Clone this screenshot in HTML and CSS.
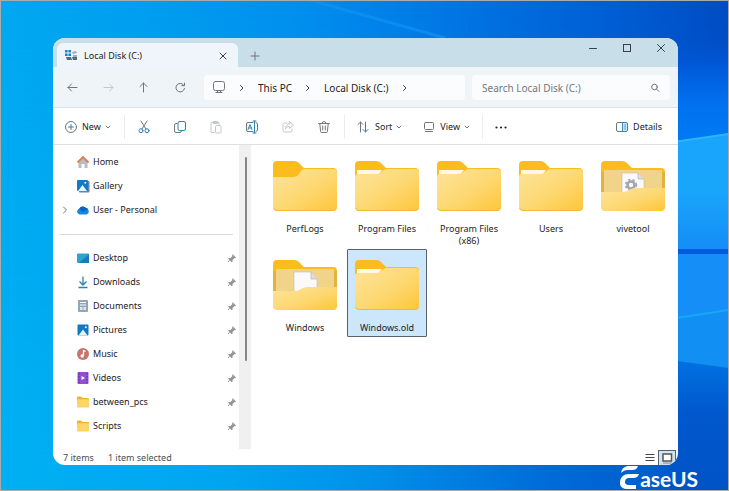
FILE: index.html
```html
<!DOCTYPE html>
<html lang="en">
<head>
<meta charset="utf-8">
<title>Local Disk (C:)</title>
<link rel="stylesheet" href="styles.css">
</head>
<body>
<svg class="wallpaper" viewBox="0 0 729 491" preserveAspectRatio="none" aria-hidden="true">
  <defs>
    <linearGradient id="sky" x1="0" y1="0" x2="1" y2="0">
      <stop offset="0" stop-color="#00a9f0"/><stop offset=".2" stop-color="#009ef0"/><stop offset=".42" stop-color="#008eee"/><stop offset=".6" stop-color="#0078e6"/><stop offset=".8" stop-color="#0062d8"/><stop offset="1" stop-color="#004cc4"/>
    </linearGradient>
    <linearGradient id="glow" x1="0" y1="0" x2="1" y2="0">
      <stop offset="0" stop-color="#00b0f2"/><stop offset=".3" stop-color="#00a6f0"/><stop offset=".5" stop-color="#0092ea"/><stop offset=".75" stop-color="#006cd8"/><stop offset="1" stop-color="#0053c6"/>
    </linearGradient>
    <linearGradient id="fade" x1="0" y1="0" x2="0" y2="1">
      <stop offset="0" stop-color="#000"/><stop offset="1" stop-color="#fff"/>
    </linearGradient>
    <mask id="low"><rect width="729" height="491" fill="url(#fade)"/></mask>
    <linearGradient id="edge" x1="0" y1="0" x2="0" y2="1">
      <stop offset="0" stop-color="#0052cc" stop-opacity="0"/><stop offset=".25" stop-color="#0058d8"/><stop offset=".6" stop-color="#0070ee"/><stop offset="1" stop-color="#007cf5"/>
    </linearGradient>
    <linearGradient id="pane1" x1="0" y1="0" x2="0" y2="1">
      <stop offset="0" stop-color="#18a4fa"/><stop offset=".5" stop-color="#18a6fb"/><stop offset="1" stop-color="#158cf6"/>
    </linearGradient>
    <linearGradient id="pane3" x1="0" y1="0" x2="0" y2="1">
      <stop offset="0" stop-color="#0072e2"/><stop offset=".4" stop-color="#0058cc"/><stop offset="1" stop-color="#0053c6"/>
    </linearGradient>
  </defs>
  <rect width="729" height="491" fill="url(#sky)"/>
  <rect width="729" height="491" fill="url(#glow)" mask="url(#low)"/>
  <path d="M310 0l135 38" stroke="#1292f4" stroke-width="3" opacity=".7"/>
  <path d="M670 38H729V145H670z" fill="url(#edge)"/>
  <path d="M670 143L729 133V250H670z" fill="url(#pane1)"/>
  <path d="M670 142.500L729 134" stroke="#2eb4fb" stroke-width="2"/>
  <path d="M670 253H729V370L670 360z" fill="#158ef7"/>
  <path d="M670 319L729 311V369L670 360z" fill="#128ff3"/>
  <path d="M670 319L729 310" stroke="#18a8fa" stroke-width="2"/>
  <path d="M670 249H729V254H670z" fill="#005ade"/>
  <path d="M670 360L729 368V491H670z" fill="url(#pane3)"/>
</svg>

<main class="window">
  <header class="titlebar">
    <div class="tab">
      <svg class="i14" viewBox="0 0 14 14"><path d="M1 1h2.600v2.600H1zM4.400 1H7v2.600H4.400zM1 4.400h2.600V7H1zM4.400 4.400H7V7H4.400z" fill="#1685c9"/><path d="M8 3l4-1 1 2-4 1zM9 6h4v2H9z" fill="#9aafbc"/><path d="M2 8h5l1 3H3zM8 8h5v3H9z" fill="#536c7d"/></svg>
      <span>Local Disk (C:)</span>
      <button class="plain tab-close" aria-label="Close tab"><svg class="i10" viewBox="0 0 10 10"><path class="d" d="M2 2l6 6M8 2l-6 6"/></svg></button>
    </div>
    <button class="plain new-tab" aria-label="New tab"><svg class="i10" viewBox="0 0 10 10"><path class="k" d="M5 1v8M1 5h8"/></svg></button>
    <div class="caption">
      <button class="plain" aria-label="Minimize"><svg class="i10" viewBox="0 0 10 10"><path class="d" d="M1.500 5.500h7"/></svg></button>
      <button class="plain" aria-label="Maximize"><svg class="i10" viewBox="0 0 10 10"><rect class="d" x="1.500" y="1.500" width="7" height="7"/></svg></button>
      <button class="plain" aria-label="Close"><svg class="i10" viewBox="0 0 10 10"><path class="d" d="M1.500 1.500l7 7M8.500 1.500l-7 7"/></svg></button>
    </div>
  </header>

  <nav class="navbar" aria-label="Navigation">
    <div class="history">
      <button class="plain" aria-label="Back"><svg class="i12" viewBox="0 0 12 12"><path class="k" d="M10 5.500H1M4.500 2L1 5.500 4.500 9"/></svg></button>
      <button class="plain" aria-label="Forward" disabled><svg class="i12" viewBox="0 0 12 12"><path class="k pale" d="M2 5.500h9M7.500 2L11 5.500 7.500 9"/></svg></button>
      <button class="plain" aria-label="Up"><svg class="i12" viewBox="0 0 12 12"><path class="k" d="M5.500 10V1M2 4.500L5.500 1 9 4.500"/></svg></button>
      <button class="plain" aria-label="Refresh"><svg class="i12" viewBox="0 0 12 12"><path class="k" d="M11 3.500A4.300 4.300 0 1 0 11.500 6.500M11.500 1v2.700H8.800"/></svg></button>
    </div>
    <div class="address">
      <svg class="i14" viewBox="0 0 14 14"><rect class="k" x="1.500" y=".5" width="11" height="9" rx="2"/><path class="k" d="M4 11.500h6M5.500 9.500v2M8.500 9.500v2"/></svg>
      <svg class="crumb" viewBox="0 0 8 8"><path class="d" d="M2.500 1.500L5 4 2.500 6.500"/></svg>
      <a href="#">This PC</a>
      <svg class="crumb" viewBox="0 0 8 8"><path class="d" d="M2.500 1.500L5 4 2.500 6.500"/></svg>
      <a href="#">Local Disk (C:)</a>
      <svg class="crumb" viewBox="0 0 8 8"><path class="d" d="M2.500 1.500L5 4 2.500 6.500"/></svg>
    </div>
    <label class="search">
      <input type="text" placeholder="Search Local Disk (C:)" aria-label="Search Local Disk (C:)">
      <svg class="i10" viewBox="0 0 10 10"><circle class="k" cx="4.500" cy="4" r="2.800"/><path class="k" d="M6.600 6.100L9 8.500"/></svg>
    </label>
  </nav>

  <div class="toolbar" role="toolbar">
    <button class="cmd new"><svg class="i14" viewBox="0 0 14 14"><circle class="k" cx="7" cy="7" r="5.500"/><path class="b" d="M7 4.500v5M4.500 7h5"/></svg><span>New</span><svg class="chev" viewBox="0 0 6 6"><path class="k" d="M1 2l2 2 2-2"/></svg></button>
    <div class="tools">
      <button class="plain" aria-label="Cut"><svg class="i14" viewBox="0 0 14 14"><path class="k" d="M4 1l5 8M10 1L5 9"/><circle class="b" cx="4" cy="10.700" r="2"/><circle class="b" cx="10" cy="10.700" r="2"/></svg></button>
      <button class="plain" aria-label="Copy"><svg class="i14" viewBox="0 0 14 14"><path class="k" d="M4 3.500H3A1.500 1.500 0 0 0 1.500 5v6A1.500 1.500 0 0 0 3 12.500h4A1.500 1.500 0 0 0 8.500 11"/><rect class="b" x="5" y="1.500" width="7.500" height="9" rx="1.500"/></svg></button>
      <button class="plain" aria-label="Paste" disabled><svg class="i14" viewBox="0 0 14 14"><path class="k pale" d="M5 12.500H3a1 1 0 0 1-1-1v-8a1 1 0 0 1 1-1h7v2M4.500 1.500h4v2h-4z"/><rect class="k pale" x="6.500" y="5.500" width="5.500" height="7.500" rx="1"/></svg></button>
      <button class="plain" aria-label="Rename"><svg class="i14" viewBox="0 0 14 14"><path class="k" d="M8 2.500H3A1.500 1.500 0 0 0 1.500 4v6A1.500 1.500 0 0 0 3 11.500h5M11 2.500A2 2 0 0 1 12.500 4v6a2 2 0 0 1-1.500 1.500"/><path class="b" d="M9.500 1v12M8 1h3M8 13h3M3 9.500L5 4.500l2 5M3.800 8h2.500"/></svg></button>
      <button class="plain" aria-label="Share" disabled><svg class="i14" viewBox="0 0 14 14"><path class="k pale" d="M6 3H3.500A1.500 1.500 0 0 0 2 4.500v6A1.500 1.500 0 0 0 3.500 12h6a1.500 1.500 0 0 0 1.500-1.500V9"/><path class="k pale" d="M8.500 1.500l4 3.500-4 3.500v-2C6.500 6.500 5.500 7 4.500 9c0-3 1.500-5 4-5.200z"/></svg></button>
      <button class="plain" aria-label="Delete"><svg class="i14" viewBox="0 0 14 14"><path class="k" d="M1.500 3.500h11M5 3.500a2 2 0 0 1 4 0M2.800 3.500l.8 8a1 1 0 0 0 1 1h4.800a1 1 0 0 0 1-1l.8-8M5.700 6v4M8.300 6v4"/></svg></button>
    </div>
    <div class="arrange">
      <button class="cmd"><svg class="i14" viewBox="0 0 14 14"><path class="k" d="M3.500 12V2M1 4.500L3.500 2 6 4.500"/><path class="b" d="M8.500 2v10M6 9.500L8.500 12 11 9.500"/></svg><span>Sort</span><svg class="chev" viewBox="0 0 6 6"><path class="k" d="M1 2l2 2 2-2"/></svg></button>
      <button class="cmd"><svg class="i14" viewBox="0 0 14 14"><rect class="k" x="2.500" y="2.500" width="9" height="7" rx="1"/><path class="k" d="M3.500 11.500h7"/></svg><span>View</span><svg class="chev" viewBox="0 0 6 6"><path class="k" d="M1 2l2 2 2-2"/></svg></button>
    </div>
    <button class="plain more" aria-label="See more"><svg class="i14" viewBox="0 0 14 14"><g fill="#222"><circle cx="2.500" cy="7.500" r="1.100"/><circle cx="7" cy="7.500" r="1.100"/><circle cx="11.500" cy="7.500" r="1.100"/></g></svg></button>
    <button class="cmd details"><svg class="i14" viewBox="0 0 14 14"><path class="k" d="M8 2.500H3A1.500 1.500 0 0 0 1.500 4v6A1.500 1.500 0 0 0 3 11.500h5"/><path d="M8 2.500h3A1.500 1.500 0 0 1 12.500 4v6a1.500 1.500 0 0 1-1.500 1.500H8z" fill="#d9effa"/><path class="b" d="M8 2.500h3A1.500 1.500 0 0 1 12.500 4v6a1.500 1.500 0 0 1-1.500 1.500H8zM9.700 5h1M9.700 7h1M9.700 9h1"/></svg><span>Details</span></button>
  </div>

  <div class="content">
    <aside class="sidebar">
      <ul class="places">
        <li><a href="#"><svg class="i14" viewBox="0 0 14 14"><path d="M2.500 6L7 2l4.500 4v7H8.500V9h-3v4h-3z" fill="#b9bdc1"/><path d="M1.500 7.500L7 2l5.500 5.500" fill="none" stroke="#df7d4e" stroke-width="1.800"/></svg><span>Home</span></a></li>
        <li><a href="#"><svg class="i14" viewBox="0 0 14 14"><rect x="3" y="2" width="10.500" height="11.500" rx="1" fill="#5c88a5"/><rect x="1" y="1" width="11" height="11" rx="1" fill="#1479c7"/><path d="M2 12l4.500-6L11 12z" fill="#e5f5ff"/><circle cx="9.300" cy="3.700" r="1" fill="#fff"/></svg><span>Gallery</span></a></li>
        <li><svg class="crumb expand" viewBox="0 0 8 8"><path class="k" d="M2.500 1l3 3-3 3"/></svg><a href="#"><svg class="i14" viewBox="0 0 14 14"><path d="M3.500 11.500a3 3 0 0 1-.3-5.800A4 4 0 0 1 10 5a3.400 3.400 0 0 1 .7 6.500z" fill="#1687df"/><path d="M3.200 5.700A4 4 0 0 1 10 5a3 3 0 0 1 2 1L7 9z" fill="#0a62c2"/></svg><span>User - Personal</span></a></li>
      </ul>
      <hr>
      <ul class="places pinned">
        <li><a href="#"><svg class="i14" viewBox="0 0 14 14"><rect x="1" y="2.500" width="12" height="9.500" rx="1" fill="#2aa5cf"/><path d="M13 3v9H3z" fill="#167fb5"/></svg><span>Desktop</span></a><svg class="pin" viewBox="0 0 10 10"><use href="#pin"/></svg></li>
        <li><a href="#"><svg class="i14" viewBox="0 0 14 14"><path d="M7 1.500V10M3.500 6.500L7 10l3.500-3.500M2.500 12.500h9" fill="none" stroke="#2583ad" stroke-width="1.300"/></svg><span>Downloads</span></a><svg class="pin" viewBox="0 0 10 10"><use href="#pin"/></svg></li>
        <li><a href="#"><svg class="i14" viewBox="0 0 14 14"><rect x="2" y="1" width="10" height="12" rx="1" fill="#8fa6b4"/><path d="M4 3.500h6M4 6h6" stroke="#fff"/><path d="M4 8h2.500v3H4zM7.500 8H10v3H7.500z" fill="#dce8ef"/></svg><span>Documents</span></a><svg class="pin" viewBox="0 0 10 10"><use href="#pin"/></svg></li>
        <li><a href="#"><svg class="i14" viewBox="0 0 14 14"><rect x="1.500" y="1.500" width="11" height="11" rx="1" fill="#1378bf"/><path d="M2.500 12.500L7 6.500l4.500 6z" fill="#e5f5ff"/><circle cx="9.800" cy="4.200" r="1" fill="#fff"/></svg><span>Pictures</span></a><svg class="pin" viewBox="0 0 10 10"><use href="#pin"/></svg></li>
        <li><a href="#"><svg class="i14" viewBox="0 0 14 14"><circle cx="7" cy="7" r="6" fill="#c4756c"/><path d="M7.500 3v5.500M7.500 3.300l2 1.200" stroke="#fff" stroke-width="1.300"/><circle cx="6.200" cy="9" r="1.700" fill="#fff"/></svg><span>Music</span></a><svg class="pin" viewBox="0 0 10 10"><use href="#pin"/></svg></li>
        <li><a href="#"><svg class="i14" viewBox="0 0 14 14"><rect x="1.500" y="1" width="11" height="12" rx="1" fill="#9150d0"/><path d="M3 2v10M11 2v10" stroke="#5c2899" stroke-dasharray="1.500 1.500"/><path d="M5.500 5L9 7 5.500 9z" fill="#fff"/></svg><span>Videos</span></a><svg class="pin" viewBox="0 0 10 10"><use href="#pin"/></svg></li>
        <li><a href="#"><svg class="i14" viewBox="0 0 14 14"><use href="#mini"/></svg><span>between_pcs</span></a><svg class="pin" viewBox="0 0 10 10"><use href="#pin"/></svg></li>
        <li><a href="#"><svg class="i14" viewBox="0 0 14 14"><use href="#mini"/></svg><span>Scripts</span></a><svg class="pin" viewBox="0 0 10 10"><use href="#pin"/></svg></li>
      </ul>
    </aside>
    <div class="scrollbar"><div class="thumb"></div></div>
    <section class="files" aria-label="Files">
      <button class="file"><svg viewBox="0 0 64 52"><use href="#closed"/></svg><span>PerfLogs</span></button>
      <button class="file"><svg viewBox="0 0 64 52"><use href="#filled"/></svg><span>Program Files</span></button>
      <button class="file"><svg viewBox="0 0 64 52"><use href="#filled"/></svg><span>Program Files (x86)</span></button>
      <button class="file"><svg viewBox="0 0 64 52"><use href="#filled"/></svg><span>Users</span></button>
      <button class="file"><svg viewBox="0 0 64 52"><use href="#back"/><path d="M21 13h16l6 6v16H21z" fill="#fafafa" stroke="#c9c3b0" stroke-width=".7"/><path d="M37 13v6h6" fill="#dedede" stroke="#b5b5b5" stroke-width=".7"/><circle cx="30" cy="25" r="3.500" fill="none" stroke="#a0a6ac" stroke-width="2.600"/><circle cx="30" cy="25" r="5.400" fill="none" stroke="#a0a6ac" stroke-width="1.600" stroke-dasharray="2.200 2.200"/><use href="#front"/></svg><span>vivetool</span></button>
      <button class="file"><svg viewBox="0 0 64 52"><use href="#back"/><path d="M21 13h17l6 7v15H21z" fill="#fafafa" stroke="#c9c3b0" stroke-width=".7"/><path d="M38 13v7h6" fill="#dedede" stroke="#b5b5b5" stroke-width=".7"/><use href="#front"/></svg><span>Windows</span></button>
      <button class="file selected"><svg viewBox="0 0 64 52"><use href="#filled"/></svg><span>Windows.old</span></button>
    </section>
  </div>

  <footer class="status">
    <span>7 items</span><span>1 item selected</span>
    <div class="modes">
      <button class="plain" aria-label="Details view"><svg class="i10" viewBox="0 0 10 10"><path d="M.5 1.500h9M.5 4.500h9M.5 7.500h9" stroke="#444"/></svg></button>
      <button class="plain active" aria-label="Large icons"><svg class="i12" viewBox="0 0 12 12"><rect x="2" y="2" width="8.500" height="7" fill="#fff" stroke="#555" stroke-width="1.500"/><path d="M2 11h9" stroke="#888"/></svg></button>
    </div>
  </footer>
</main>

<div class="brand">
  <svg viewBox="0 0 20 24" aria-hidden="true"><path d="M1 7C2 2 5 0 9 0h9c-1 3-3 4-6 4H8C5 4 3 5 1 7zM0 17C0 11 4 8 9 8h10c-1 3-3 4-6 4H9c-3 0-4 2-4 4s1 3 4 3h7v4H8c-5 0-8-2-8-6z" fill="#fff"/></svg>
  <span>aseUS</span>
</div>

<svg class="symbols" aria-hidden="true">
  <defs>
    <linearGradient id="gold" x1="0" y1="0" x2="1" y2="1"><stop offset="0" stop-color="#fee39a"/><stop offset=".5" stop-color="#fdd975"/><stop offset="1" stop-color="#fec63a"/></linearGradient>
    <g id="pin" fill="#91969a"><path d="M5.500 1l3.500 3.500-1 .7-.5-.2-2 2 .1 1.700-.8.600L1.200 5.700l.6-.8 1.700.1 2-2-.3-.8z"/><path d="M3 6.500L1 9" stroke="#91969a"/></g>
    <g id="mini"><path d="M1 2.500q0-1 1-1h3l1.500 1.500H12q1 0 1 1V6H1z" fill="#efb22c"/><rect x="1" y="4.200" width="12" height="8.300" rx="1" fill="#fdd465"/></g>
    <path id="flap" d="M0 5q0-4 4-4h17q3 0 5 2l5 5h29q4 0 4 4v12H0z" fill="#fbbc1d"/>
    <g id="closed"><use href="#flap"/><path d="M0 17H21q3 0 5-3l3-4q1-1 3-1h28.500q3.500 0 3.500 3.500V47q0 4-4 4H4q-4 0-4-4z" fill="url(#gold)"/><path d="M.5 48q1 2.500 4 2.500h55q3 0 4-2.500" fill="none" stroke="#f0b93c"/></g>
    <g id="filled"><use href="#flap"/><path d="M2 10h25l-4 5H2z" fill="#fff8e6"/><path d="M0 17q0-3 3-3H21q3 0 5-2l3-2q1-1 3-1h28.500q3.500 0 3.500 3.500V47q0 4-4 4H4q-4 0-4-4z" fill="url(#gold)"/><path d="M.5 48q1 2.500 4 2.500h55q3 0 4-2.500" fill="none" stroke="#f0b93c"/></g>
    <g id="back"><use href="#flap"/><path d="M0 12h64v36H0z" fill="#e3b33b"/><path d="M3 10h58v30H3z" fill="#efd48a"/></g>
    <path id="front" d="M0 32H22q3 0 6-2t6-2h30v19q0 4-4 4H4q-4 0-4-4z" fill="url(#gold)"/>
  </defs>
</svg>
</body>
</html>
```
FILE: styles.css
```css
* { box-sizing: border-box; }

body {
  margin: 0;
  min-height: 100vh;
  display: flex;
  flex-direction: column;
  position: relative;
  padding: 38px 51px 26px 53px;
  font: 9px/12px "Noto Sans", sans-serif;
  color: #222;
}

body::after {
  content: "";
  position: absolute;
  inset: 0;
  border: 1px solid #a9abad;
  pointer-events: none;
}

.wallpaper { position: absolute; inset: 0; width: 100%; height: 100%; z-index: -1; }
.symbols { position: absolute; width: 0; height: 0; }

button { font: inherit; color: inherit; background: none; border: 0; padding: 0; }
a { color: inherit; text-decoration: none; }
ul { list-style: none; margin: 0; padding: 0; }
svg { display: block; flex: none; }

.k, .b, .d { fill: none; stroke: #70757a; stroke-width: 1; stroke-linecap: round; }
.b { stroke: #2f83b7; }
.d { stroke: #36414a; }
.pale { stroke: #c3c7ca; }
.i10 { width: 10px; height: 10px; }
.i12 { width: 12px; height: 12px; }
.i14 { width: 14px; height: 14px; }
.crumb { width: 8px; height: 8px; }
.chev { width: 6px; height: 6px; }
.plain { display: grid; place-items: center; }

.window {
  flex: 1;
  display: flex;
  flex-direction: column;
  overflow: hidden;
  border-radius: 12px;
  background: #fff;
}

.titlebar { display: flex; height: 29px; background: #c8dfea; padding-left: 4px; }
.tab {
  display: flex;
  align-items: center;
  width: 181px;
  margin-top: 5px;
  padding: 1px 10px 0 7px;
  border-radius: 6px 6px 0 0;
  background: #eff5fa;
}
.tab span { margin-left: 6px; }
.tab-close { margin-left: auto; }
.new-tab { width: 34px; padding-top: 6px; }
.caption { display: flex; margin-left: auto; height: 20px; }
.caption .plain { width: 34px; }

.navbar {
  display: flex;
  align-items: center;
  gap: 7px;
  height: 41px;
  padding: 1px 8px 0 2px;
  background: #eff4f9;
  border-bottom: 1px solid #dde2e6;
  font-size: 10px;
}
.history { display: flex; width: 142px; }
.history .plain { width: 36px; }
.address, .search {
  display: flex;
  align-items: center;
  height: 25px;
  border-radius: 4px;
  background: #fafcfe;
}
.address { flex: 253; gap: 12px; padding-left: 8px; }
.search { flex: 178; padding: 0 10px; }
.search input {
  flex: 1;
  min-width: 0;
  border: 0;
  padding: 0;
  background: none;
  outline: 0;
  font: inherit;
}
.search input::placeholder { color: #73777b; opacity: 1; }

.toolbar {
  display: flex;
  align-items: center;
  height: 37px;
  padding: 1px 16px 0 11px;
  border-bottom: 1px solid #dfdfdf;
}
.cmd { display: flex; align-items: center; gap: 4px; }
.new { width: 60px; }
.tools, .arrange {
  display: flex;
  align-items: center;
  height: 24px;
  border-left: 1px solid #ececec;
}
.tools { width: 220px; padding-left: 1px; }
.tools .plain { width: 36px; }
.arrange { gap: 20px; width: 139px; padding-left: 12px; border-right: 1px solid #ececec; }
.more { width: 36px; }
.details { margin-left: auto; }

.content { flex: 1; display: flex; min-height: 0; }
.sidebar { width: 186px; padding-top: 5px; }
.places li {
  display: flex;
  align-items: center;
  height: 24px;
  padding-left: 23px;
  position: relative;
}
.places a { display: flex; align-items: center; gap: 3px; flex: 1; }
.expand { position: absolute; left: 8px; }
.pin { width: 10px; height: 10px; margin-right: 2px; }
hr { margin: 12px 6px 11px; border: 0; border-top: 1px solid #dcdcdc; }
.scrollbar { width: 12px; padding: 12px 4px 0 6px; background: #f0f0f0; }
.thumb { height: 70%; border-radius: 1px; background: #858585; }

.files {
  flex: 1;
  display: grid;
  grid-template-columns: repeat(auto-fill, 80px);
  align-content: start;
  align-items: start;
  gap: 1px 2px;
  padding: 5px 2px 0 14px;
}
.file {
  display: flex;
  flex-direction: column;
  align-items: center;
  gap: 11px;
  min-height: 88px;
  padding: 9px 4px 0;
  border: 1px solid transparent;
}
.file svg { width: 64px; height: 52px; }
.selected { background: #cce6fc; border-color: #59636b; border-radius: 1px; }

.status {
  display: flex;
  align-items: center;
  gap: 14px;
  height: 16px;
  padding: 1px 0 0 10px;
  color: #4a4f54;
}
.modes { display: flex; margin-left: auto; height: 16px; padding-right: 2px; gap: 3px; }
.active { width: 18px; border: 1px solid #53636e; border-bottom: 0; background: #cfe4f0; }

.brand {
  position: absolute;
  right: 31px;
  bottom: 1px;
  display: flex;
  align-items: flex-end;
  color: #fff;
  font: 700 21px/22px Lato, sans-serif;
}
.brand svg { width: 20px; height: 24px; }
```
